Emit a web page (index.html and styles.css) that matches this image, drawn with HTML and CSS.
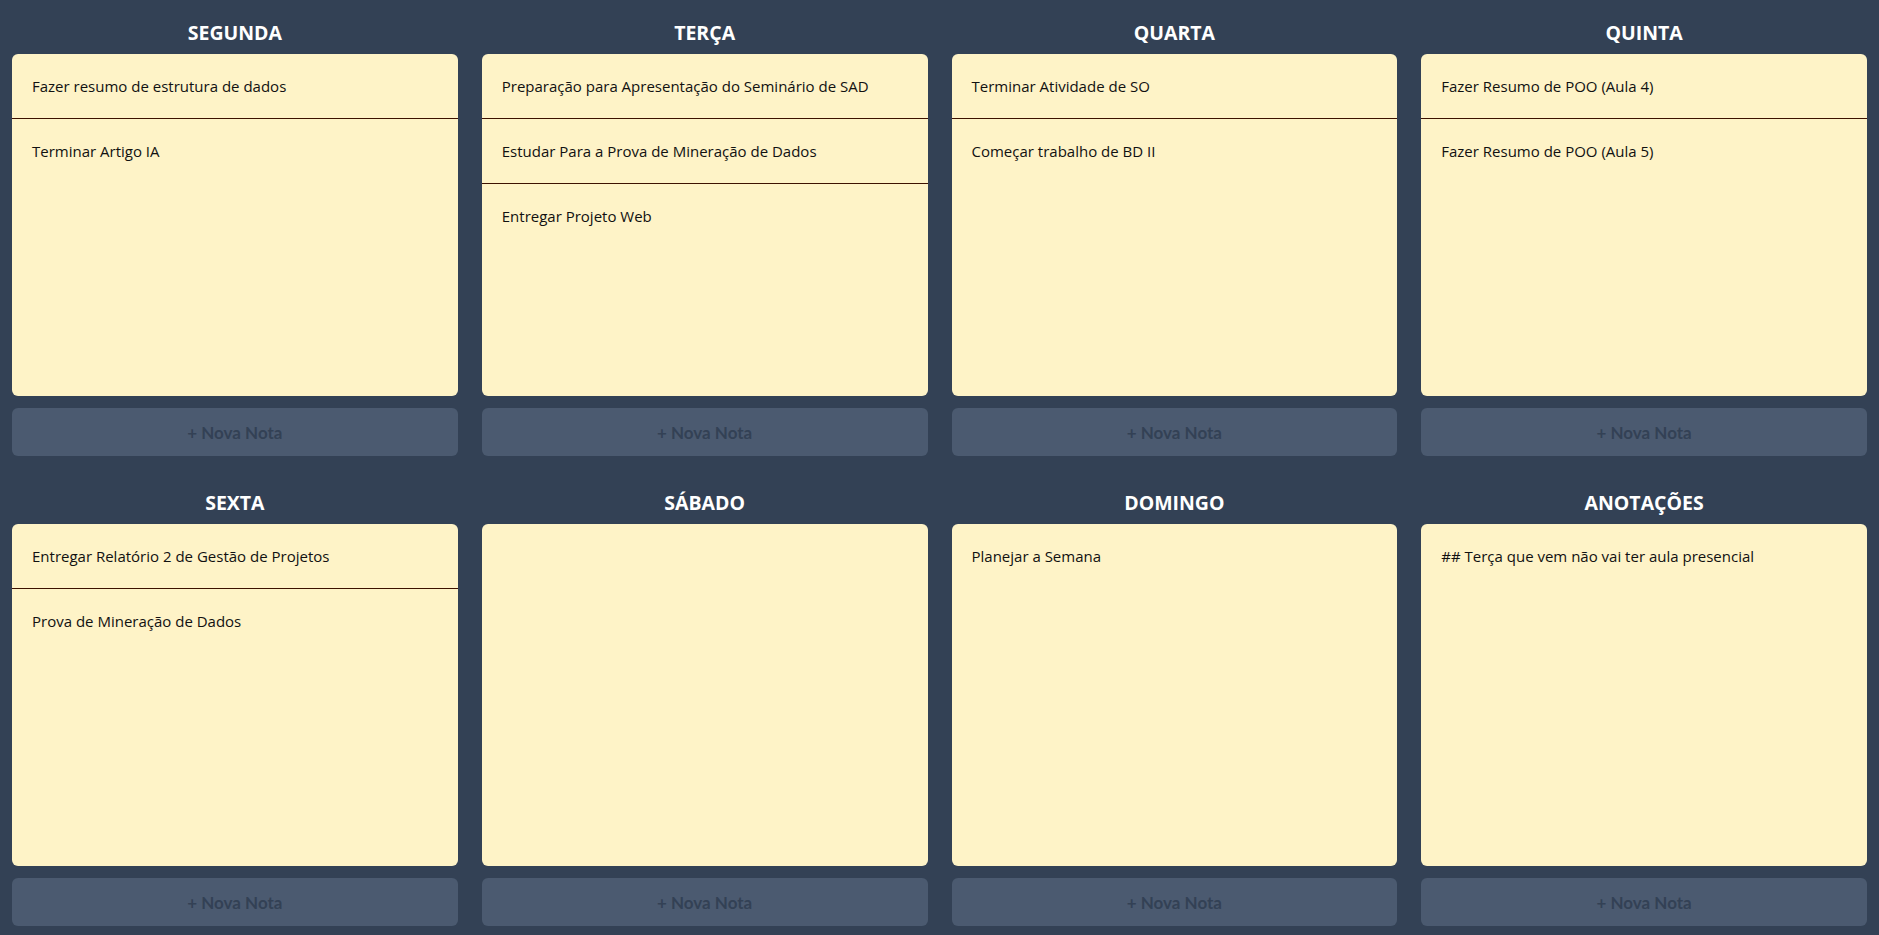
FILE: index.html
```html
<!DOCTYPE html>
<html lang="pt-BR">
<head>
<meta charset="utf-8">
<title>Semana</title>
<link rel="stylesheet" href="styles.css">
</head>
<body>
<main class="board">
  <section class="day">
    <h2 class="day-title">SEGUNDA</h2>
    <div class="card">
      <div class="note">Fazer resumo de estrutura de dados</div>
      <div class="note">Terminar Artigo IA</div>
    </div>
    <button class="add">+ Nova Nota</button>
  </section>
  <section class="day">
    <h2 class="day-title">TERÇA</h2>
    <div class="card">
      <div class="note">Preparação para Apresentação do Seminário de SAD</div>
      <div class="note">Estudar Para a Prova de Mineração de Dados</div>
      <div class="note">Entregar Projeto Web</div>
    </div>
    <button class="add">+ Nova Nota</button>
  </section>
  <section class="day">
    <h2 class="day-title">QUARTA</h2>
    <div class="card">
      <div class="note">Terminar Atividade de SO</div>
      <div class="note">Começar trabalho de BD II</div>
    </div>
    <button class="add">+ Nova Nota</button>
  </section>
  <section class="day">
    <h2 class="day-title">QUINTA</h2>
    <div class="card">
      <div class="note">Fazer Resumo de POO (Aula 4)</div>
      <div class="note">Fazer Resumo de POO (Aula 5)</div>
    </div>
    <button class="add">+ Nova Nota</button>
  </section>
  <section class="day">
    <h2 class="day-title">SEXTA</h2>
    <div class="card">
      <div class="note">Entregar Relatório 2 de Gestão de Projetos</div>
      <div class="note">Prova de Mineração de Dados</div>
    </div>
    <button class="add">+ Nova Nota</button>
  </section>
  <section class="day">
    <h2 class="day-title">SÁBADO</h2>
    <div class="card"></div>
    <button class="add">+ Nova Nota</button>
  </section>
  <section class="day">
    <h2 class="day-title">DOMINGO</h2>
    <div class="card">
      <div class="note">Planejar a Semana</div>
    </div>
    <button class="add">+ Nova Nota</button>
  </section>
  <section class="day">
    <h2 class="day-title">ANOTAÇÕES</h2>
    <div class="card">
      <div class="note">## Terça que vem não vai ter aula presencial</div>
    </div>
    <button class="add">+ Nova Nota</button>
  </section>
</main>
</body>
</html>
```
FILE: styles.css
```css
html, body {
  margin: 0;
  padding: 0;
  background: #334155;
}

body {
  font-family: "Open Sans", "Noto Sans", sans-serif;
}

.board {
  display: grid;
  grid-template-columns: repeat(4, 1fr);
  column-gap: 24px;
  row-gap: 38px;
  padding: 24px 12px 10px 12px;
}

.day {
  display: flex;
  flex-direction: column;
  gap: 12px;
}

.day-title {
  margin: 0;
  color: #ffffff;
  font-size: 19.5px;
  font-weight: 700;
  line-height: 18px;
  text-align: center;
}

.card {
  height: 342px;
  background: #fef3c7;
  border-radius: 6px;
  overflow: hidden;
}

.note {
  height: 64px;
  display: flex;
  align-items: center;
  padding: 0 20px;
  font-size: 15px;
  color: #111111;
}

.note + .note {
  border-top: 1px solid #3d1200;
}

.add {
  height: 48px;
  border: 0;
  border-radius: 6px;
  background: #4b5a70;
  color: #334155;
  font-family: "Lato", "Open Sans", sans-serif;
  font-size: 17px;
  font-weight: 700;
  cursor: pointer;
}
```
